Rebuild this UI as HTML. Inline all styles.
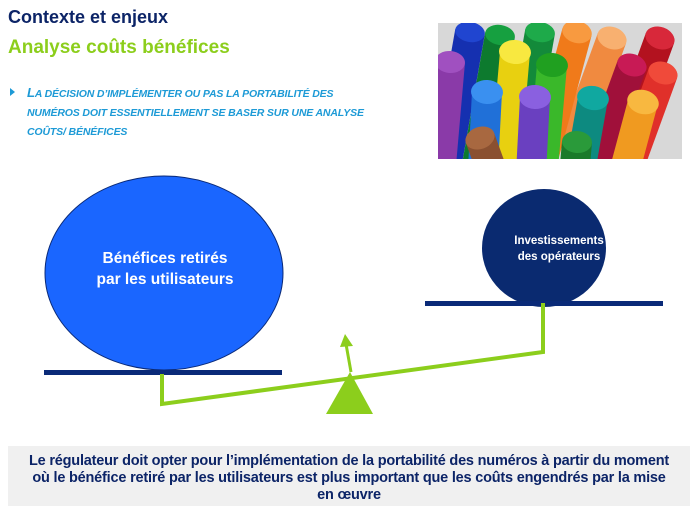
<!DOCTYPE html>
<html><head><meta charset="utf-8"><style>
html,body{margin:0;padding:0;background:#fff;width:690px;height:506px;overflow:hidden;position:relative;font-family:"Liberation Sans",sans-serif}
.t1{position:absolute;left:8px;top:7px;font-size:18px;font-weight:bold;color:#0c2467}
.t2{position:absolute;left:8px;top:37px;font-size:19px;font-weight:bold;color:#8cce1c}
.bul{position:absolute;left:27px;top:83px;width:400px;font-size:10.5px;font-weight:bold;line-height:19px;color:#1d9ad6;font-style:italic;text-transform:uppercase;white-space:nowrap;letter-spacing:-0.15px}
.bul b{font-size:13px}
.bul:before{content:"";position:absolute;left:-17px;top:5px;border-left:5px solid #1d9ad6;border-top:4px solid transparent;border-bottom:4px solid transparent}
.box{position:absolute;left:8px;top:446px;width:682px;height:60px;background:#f0f0f0;text-align:center;font-size:14.5px;font-weight:bold;color:#0c2467;line-height:17px;padding-top:7px;box-sizing:border-box;white-space:nowrap;letter-spacing:-0.2px}
.lbl{position:absolute;color:#fff;font-weight:bold;text-align:center}
</style></head><body>
<div class="t1">Contexte et enjeux</div>
<div class="t2">Analyse coûts bénéfices</div>
<div class="bul"><b>L</b>a décision d’implémenter ou pas la portabilité des<br>numéros doit essentiellement se baser sur une analyse<br>coûts/ bénéfices</div>

<svg style="position:absolute;left:438px;top:23px" width="244" height="136" viewBox="438 23 244 136">
<rect x="438" y="23" width="244" height="136" fill="#d8d8d8"/>
<g stroke="none">
<g transform="rotate(20 660 38)"><rect x="645" y="38" width="30" height="120" fill="#b3121f"/><ellipse cx="660" cy="38" rx="15" ry="11" fill="#d8283a"/></g>
<g transform="rotate(20 612 38)"><rect x="597" y="38" width="30" height="120" fill="#f08a40"/><ellipse cx="612" cy="38" rx="15" ry="11" fill="#f8b070"/></g>
<g transform="rotate(15 577 32)"><rect x="562" y="32" width="30" height="130" fill="#f07a1a"/><ellipse cx="577" cy="32" rx="15" ry="11" fill="#f89a40"/></g>
<g transform="rotate(10 470 32)"><rect x="455" y="32" width="30" height="130" fill="#1530b0"/><ellipse cx="470" cy="32" rx="15" ry="10" fill="#2045d0"/></g>
<g transform="rotate(10 500 35)"><rect x="485" y="35" width="30" height="130" fill="#0d7a2e"/><ellipse cx="500" cy="35" rx="15" ry="10" fill="#16a040"/></g>
<g transform="rotate(10 540 32)"><rect x="525" y="32" width="30" height="130" fill="#138a3a"/><ellipse cx="540" cy="32" rx="15" ry="10" fill="#1eaa4a"/></g>
<g transform="rotate(20 663 73)"><rect x="648" y="73" width="30" height="100" fill="#e0302a"/><ellipse cx="663" cy="73" rx="15" ry="11" fill="#f04a3a"/></g>
<g transform="rotate(20 632 65)"><rect x="617" y="65" width="30" height="100" fill="#a0103a"/><ellipse cx="632" cy="65" rx="15" ry="11" fill="#c81a55"/></g>
<g transform="rotate(5 450 62)"><rect x="435" y="62" width="30" height="100" fill="#8a3aa8"/><ellipse cx="450" cy="62" rx="15" ry="11" fill="#a050c0"/></g>
<g transform="rotate(5 515 52)"><rect x="500" y="52" width="30" height="110" fill="#e8d010"/><ellipse cx="515" cy="52" rx="16" ry="12" fill="#f8e840"/></g>
<g transform="rotate(5 552 65)"><rect x="537" y="65" width="30" height="100" fill="#3ab82a"/><ellipse cx="552" cy="65" rx="16" ry="12" fill="#20a020"/></g>
<g transform="rotate(15 643 102)"><rect x="628" y="102" width="30" height="80" fill="#f09a20"/><ellipse cx="643" cy="102" rx="16" ry="12" fill="#f8b840"/></g>
<g transform="rotate(10 593 98)"><rect x="578" y="98" width="30" height="80" fill="#0d8a80"/><ellipse cx="593" cy="98" rx="16" ry="12" fill="#10a8a0"/></g>
<g transform="rotate(3 487 92)"><rect x="472" y="92" width="30" height="80" fill="#2070d8"/><ellipse cx="487" cy="92" rx="16" ry="12" fill="#3a90f0"/></g>
<g transform="rotate(3 535 97)"><rect x="520" y="97" width="30" height="80" fill="#6a40c0"/><ellipse cx="535" cy="97" rx="16" ry="12" fill="#8a60e0"/></g>
<g transform="rotate(-20 480 138)"><rect x="465" y="138" width="30" height="40" fill="#8a5030"/><ellipse cx="480" cy="138" rx="15" ry="11" fill="#a86840"/></g>
<g transform="rotate(5 577 142)"><rect x="562" y="142" width="30" height="40" fill="#1a7a2a"/><ellipse cx="577" cy="142" rx="15" ry="11" fill="#2a9a3a"/></g>
</g>
</svg>

<svg style="position:absolute;left:0;top:0" width="690" height="446">
<ellipse cx="164" cy="273" rx="119" ry="97" fill="#1a66ff" stroke="#0a2a78" stroke-width="1"/>
<rect x="44" y="370" width="238" height="5" fill="#0a2a78"/>
<ellipse cx="544" cy="248" rx="62" ry="59" fill="#0a2a70"/>
<rect x="425" y="301" width="238" height="5" fill="#0a2a78"/>
<polyline points="162,374 162,404 543,352 543,303" fill="none" stroke="#8cce1c" stroke-width="4" stroke-linejoin="miter"/>
<line x1="351" y1="372" x2="346" y2="344" stroke="#8cce1c" stroke-width="3"/>
<polygon points="345,334 340,347 353,346" fill="#8cce1c"/>
<polygon points="350,372 326,414 373,414" fill="#8cce1c"/>
</svg>
<div class="lbl" style="left:65px;top:248px;width:200px;font-size:15.5px;line-height:21px">Bénéfices retirés<br>par les utilisateurs</div>
<div class="lbl" style="left:499px;top:233px;width:120px;font-size:11.5px;line-height:16px">Investissements<br>des opérateurs</div>

<div class="box">Le régulateur doit opter pour l’implémentation de la portabilité des numéros à partir du moment<br>où le bénéfice retiré par les utilisateurs est plus important que les coûts engendrés par la mise<br>en œuvre</div>
</body></html>
